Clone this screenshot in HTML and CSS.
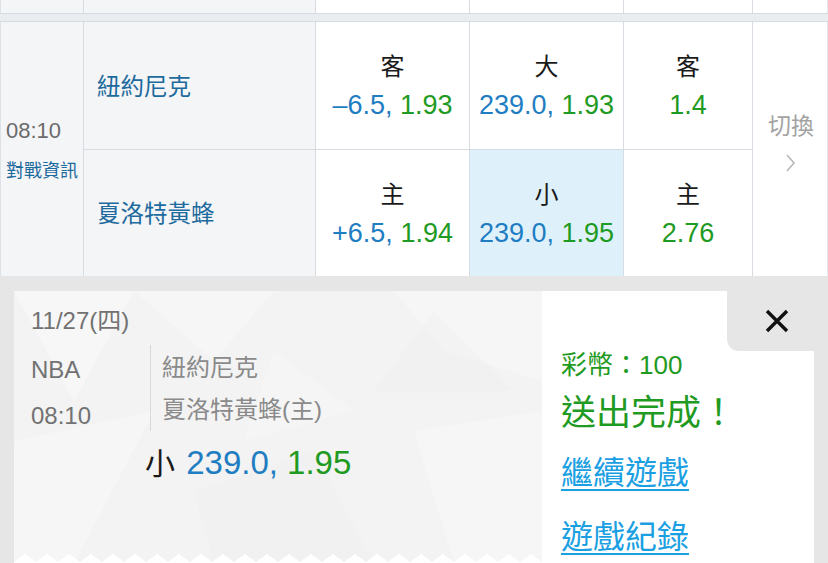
FILE: index.html
```html
<!DOCTYPE html>
<html lang="zh-Hant">
<head>
<meta charset="utf-8">
<title>投注</title>
<link rel="stylesheet" href="styles.css">
</head>
<body>
<div class="page">
  <div class="prev-row">
    <div class="cell name-bg"></div>
    <div class="cell name-bg"></div>
    <div class="cell"></div>
    <div class="cell"></div>
    <div class="cell"></div>
    <div class="cell last"></div>
  </div>
  <div class="sep"></div>
  <div class="match">
    <div class="cell time-cell">
      <div class="time">08:10</div>
      <div class="info">對戰資訊</div>
    </div>
    <div class="cell team-cell r1">紐約尼克</div>
    <div class="cell odd r1"><div class="lbl">客</div><div class="num"><span class="blue">–6.5,</span> <span class="green">1.93</span></div></div>
    <div class="cell odd r1"><div class="lbl">大</div><div class="num"><span class="blue">239.0,</span> <span class="green">1.93</span></div></div>
    <div class="cell odd r1"><div class="lbl">客</div><div class="num"><span class="green">1.4</span></div></div>
    <div class="cell switch-cell">
      <div class="switch">切換</div>
      <svg class="chev" width="12" height="20" viewBox="0 0 12 20"><polyline points="2,2 9,10 2,18" fill="none" stroke="#b8b8b8" stroke-width="1.6"/></svg>
    </div>
    <div class="cell team-cell">夏洛特黃蜂</div>
    <div class="cell odd"><div class="lbl">主</div><div class="num"><span class="blue">+6.5,</span> <span class="green">1.94</span></div></div>
    <div class="cell odd sel"><div class="lbl">小</div><div class="num"><span class="blue">239.0,</span> <span class="green">1.95</span></div></div>
    <div class="cell odd"><div class="lbl">主</div><div class="num"><span class="green">2.76</span></div></div>
  </div>
  <div class="bottom">
    <div class="card">
      <div class="ticket">
        <svg class="pattern" width="528" height="272" viewBox="0 0 528 272">
          <polygon points="0,0 120,0 60,110" fill="#ffffff" opacity="0.35"/>
          <polygon points="120,0 260,0 200,70" fill="#ffffff" opacity="0.25"/>
          <polygon points="380,0 528,0 528,90 430,60" fill="#ffffff" opacity="0.3"/>
          <polygon points="420,20 500,100 360,100" fill="#eeeeee" opacity="0.35"/>
          <polygon points="0,150 140,120 60,272 0,272" fill="#ffffff" opacity="0.3"/>
          <polygon points="180,200 300,160 360,272 200,272" fill="#efefef" opacity="0.35"/>
          <polygon points="400,140 528,120 528,272 440,272" fill="#ffffff" opacity="0.3"/>
          <polygon points="260,60 340,120 230,150" fill="#ffffff" opacity="0.2"/>
        </svg>
        <div class="date">11/27(四)</div>
        <div class="game">
          <div class="meta">
            <div>NBA</div>
            <div>08:10</div>
          </div>
          <div class="teams">
            <div>紐約尼克</div>
            <div>夏洛特黃蜂(主)</div>
          </div>
        </div>
        <div class="pick"><span class="pick-lbl">小</span> <span class="blue">239.0,</span> <span class="green">1.95</span></div>
      </div>
      <div class="result">
        <div class="coins">彩幣：100</div>
        <div class="done">送出完成！</div>
        <a class="link link1" href="#">繼續遊戲</a>
        <a class="link link2" href="#">遊戲紀錄</a>
      </div>
      <div class="close">
        <svg width="24" height="24" viewBox="0 0 24 24"><path d="M2 2 L22 22 M22 2 L2 22" stroke="#111" stroke-width="3.4" fill="none"/></svg>
      </div>
    </div>
  </div>
</div>
</body>
</html>
```

FILE: styles.css
```css
* { box-sizing: border-box; }
html, body { margin: 0; padding: 0; }
body {
  width: 828px;
  height: 563px;
  overflow: hidden;
  background: #e6e6e6;
  font-family: "Liberation Sans", "Noto Sans CJK TC", sans-serif;
}
.page { width: 828px; }

.prev-row {
  display: grid;
  grid-template-columns: 84px 232px 154px 154px 129px 75px;
  height: 13px;
  background: #fff;
}
.prev-row .cell { border-right: 1px solid #d6dce2; }
.prev-row .cell:first-child { border-left: 1px solid #dde2e6; }
.name-bg { background: #f4f5f6; }
.cell.last { border-right: 1px solid #e3e7eb; }

.sep {
  height: 9px;
  background: #eaedf0;
  border-top: 1px solid #d5dbe0;
  border-bottom: 1px solid #d5dbe0;
}

.match {
  display: grid;
  grid-template-columns: 84px 232px 154px 154px 129px 75px;
  grid-template-rows: 128px 126px;
  background: #fff;
}
.match .cell { border-right: 1px solid #d6dce2; }
.r1 { border-bottom: 1px solid #d6dce2; }

.time-cell {
  grid-row: 1 / span 2;
  background: #f4f5f6;
  border-left: 1px solid #dde2e6;
  display: flex;
  flex-direction: column;
  justify-content: center;
  padding-left: 5px;
  padding-top: 4px;
}
.time { font-size: 22px; line-height: 40px; color: #6b6b6b; margin-bottom: 0; }
.info { font-size: 18px; line-height: 40px; color: #1d6a9e; }

.team-cell {
  background: #f4f5f6;
  display: flex;
  align-items: center;
  padding-left: 13px;
  padding-bottom: 2px;
  font-size: 23.5px;
  color: #1d6a9e;
}

.odd {
  display: flex;
  flex-direction: column;
  justify-content: center;
  align-items: center;
  padding-top: 1px;
}
.odd.sel { background: #def1fb; }
.lbl { font-size: 24px; line-height: 38px; color: #1a1a1a; }
.num { font-size: 27px; line-height: 38px; white-space: nowrap; }
.blue { color: #1f7dc2; }
.green { color: #1f9a22; }

.switch-cell {
  grid-row: 1 / span 2;
  grid-column: 6;
  display: flex;
  flex-direction: column;
  align-items: center;
  justify-content: center;
  padding-bottom: 14px;
  padding-left: 2px;
  border-right: 1px solid #e3e7eb !important;
}
.switch { font-size: 23px; line-height: 30px; color: #a3a3a3; }
.chev { margin-top: 12px; }

.bottom { padding: 15px 0 0 14px; }
.card {
  position: relative;
  width: 800px;
  height: 272px;
  display: flex;
  background: #fff;
}
.ticket {
  position: relative;
  width: 528px;
  background: #f3f3f3;
  padding: 15px 0 0 17px;
  color: #727272;
  overflow: hidden;
}
.ticket::after {
  content: "";
  position: absolute;
  left: 0;
  right: 0;
  bottom: 0;
  height: 9px;
  background: conic-gradient(from 126deg at 50% 0, #fff 108deg, transparent 0) 0 100% / 22px 9px repeat-x;
}
.pattern { position: absolute; left: 0; top: 0; }
.date, .game, .pick { position: relative; }
.date { font-size: 24px; line-height: 30px; }
.game { display: flex; margin-top: 9px; }
.meta { width: 119px; font-size: 24px; line-height: 46px; margin-top: 2px; }
.teams {
  border-left: 1px solid #d8d8d8;
  padding-left: 11px;
  padding-top: 2px;
  font-size: 24px;
  line-height: 42px;
  color: #8a8a8a;
  height: 86px;
}
.pick {
  margin-top: 4px;
  padding-left: 114px;
  font-size: 33px;
  line-height: 40px;
  color: #1a1a1a;
  white-space: nowrap;
}
.pick-lbl { font-size: 30px; margin-right: 2px; }

.result {
  flex: 1;
  padding: 55px 0 0 19px;
  display: flex;
  flex-direction: column;
  align-items: flex-start;
}
.coins { font-size: 26px; line-height: 38px; color: #1f9a22; }
.done { font-size: 35px; line-height: 50px; color: #1f9a22; margin-top: 4px; }
.link {
  font-size: 32px;
  line-height: 44px;
  color: #1aa0e2;
  text-decoration: underline;
  text-decoration-thickness: 2px;
  text-underline-offset: 5px;
}
.link1 { margin-top: 13px; }
.link2 { margin-top: 20px; }

.close {
  position: absolute;
  top: 0;
  right: 0;
  width: 87px;
  height: 60px;
  background: #e6e6e6;
  border-bottom-left-radius: 12px;
  display: flex;
  align-items: center;
  justify-content: flex-end;
  padding-right: 25px;
}
```
